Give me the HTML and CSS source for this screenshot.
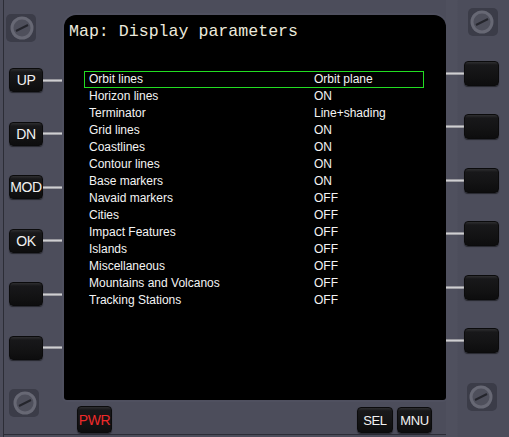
FILE: index.html
```html
<!DOCTYPE html>
<html lang="en">
<head>
    <meta charset="UTF-8">
    <meta name="viewport" content="width=device-width, initial-scale=1.0">
    <title>Map: Display parameters</title>
    <link rel="stylesheet" href="styles.css">
</head>
<body>
    <div class="panel">
        <!-- left column: screw, line select keys, screw -->
        <div class="side side-left">
            <svg class="screw screw-tl" width="32" height="32" viewBox="0 0 32 32">
                <rect x="0" y="2" width="30" height="28" rx="5" fill="#3b3c48"/>
                <circle cx="16" cy="16" r="11.5" fill="#676874"/>
                <circle cx="16" cy="16" r="8.5" fill="#4e4f5b"/>
                <line x1="10" y1="19" x2="22" y2="13" stroke="#24252c" stroke-width="2"/>
            </svg>
            <div class="keys">
                <div class="key-row"><span class="key">UP</span><span class="wire"></span></div>
                <div class="key-row"><span class="key">DN</span><span class="wire"></span></div>
                <div class="key-row"><span class="key">MOD</span><span class="wire"></span></div>
                <div class="key-row"><span class="key">OK</span><span class="wire"></span></div>
                <div class="key-row"><span class="key"></span><span class="wire"></span></div>
                <div class="key-row"><span class="key"></span><span class="wire"></span></div>
            </div>
            <svg class="screw screw-bl" width="32" height="32" viewBox="0 0 32 32">
                <rect x="0" y="2" width="30" height="28" rx="5" fill="#3b3c48"/>
                <circle cx="16" cy="16" r="11.5" fill="#676874"/>
                <circle cx="16" cy="16" r="8.5" fill="#4e4f5b"/>
                <line x1="10" y1="19" x2="22" y2="13" stroke="#24252c" stroke-width="2"/>
            </svg>
        </div>

        <div class="screen">
            <div class="title">Map: Display parameters</div>
            <div class="params">
                <div class="param selected"><span>Orbit lines</span><span>Orbit plane</span></div>
                <div class="param"><span>Horizon lines</span><span>ON</span></div>
                <div class="param"><span>Terminator</span><span>Line+shading</span></div>
                <div class="param"><span>Grid lines</span><span>ON</span></div>
                <div class="param"><span>Coastlines</span><span>ON</span></div>
                <div class="param"><span>Contour lines</span><span>ON</span></div>
                <div class="param"><span>Base markers</span><span>ON</span></div>
                <div class="param"><span>Navaid markers</span><span>OFF</span></div>
                <div class="param"><span>Cities</span><span>OFF</span></div>
                <div class="param"><span>Impact Features</span><span>OFF</span></div>
                <div class="param"><span>Islands</span><span>OFF</span></div>
                <div class="param"><span>Miscellaneous</span><span>OFF</span></div>
                <div class="param"><span>Mountains and Volcanos</span><span>OFF</span></div>
                <div class="param"><span>Tracking Stations</span><span>OFF</span></div>
            </div>
        </div>

        <div class="bottom">
            <span class="key key-wide key-pwr">PWR</span>
            <span class="key key-wide key-sel">SEL</span>
            <span class="key key-wide">MNU</span>
        </div>

        <!-- right column -->
        <div class="side side-right">
            <svg class="screw screw-tr" width="32" height="32" viewBox="0 0 32 32">
                <rect x="2" y="2" width="30" height="28" rx="5" fill="#3b3c48"/>
                <circle cx="16" cy="16" r="11.5" fill="#676874"/>
                <circle cx="16" cy="16" r="8.5" fill="#4e4f5b"/>
                <line x1="10" y1="19" x2="22" y2="13" stroke="#24252c" stroke-width="2"/>
            </svg>
            <div class="keys">
                <div class="key-row"><span class="wire"></span><span class="key key-r"></span></div>
                <div class="key-row"><span class="wire"></span><span class="key key-r"></span></div>
                <div class="key-row"><span class="wire"></span><span class="key key-r"></span></div>
                <div class="key-row"><span class="wire"></span><span class="key key-r"></span></div>
                <div class="key-row"><span class="wire"></span><span class="key key-r"></span></div>
                <div class="key-row"><span class="wire"></span><span class="key key-r"></span></div>
            </div>
            <svg class="screw screw-br" width="32" height="32" viewBox="0 0 32 32">
                <rect x="2" y="2" width="30" height="28" rx="5" fill="#3b3c48"/>
                <circle cx="16" cy="16" r="11.5" fill="#676874"/>
                <circle cx="16" cy="16" r="8.5" fill="#4e4f5b"/>
                <line x1="10" y1="19" x2="22" y2="13" stroke="#24252c" stroke-width="2"/>
            </svg>
        </div>
    </div>
</body>
</html>
```

FILE: styles.css
```css
body {
    margin: 0;
    background: #4c4d5b;
    font-family: 'Liberation Sans', Arial, sans-serif;
}

.panel {
    width: 509px;
    height: 437px;
    display: grid;
    grid-template-columns: 64px 382px 63px;
    grid-template-rows: 15px 385px 37px;
    background: #4c4d5b;
    box-shadow: inset 3px 0 0 #4c4d5b, inset 4px 0 0 #2c2d36,
                inset -3px 0 0 #4c4d5b, inset -4px 0 0 #2c2d36,
                inset 0 -2px 0 #4c4d5b, inset 0 -3px 0 #2c2d36;
    overflow: hidden;
}

.side {
    grid-row: 1 / 4;
    display: flex;
    flex-direction: column;
}

.side-left {
    grid-column: 1;
}

.side-right {
    grid-column: 3;
    background: linear-gradient(90deg, #4f505e 0, #4f505e 11px, #4c4d5b 12px);
}

.screw {
    display: block;
    flex: none;
}

.screw-tl {
    margin: 12px 0 0 6px;
}

.screw-bl {
    margin: 27px 0 0 9px;
}

.screw-tr {
    margin: 6px 0 0 20px;
}

.screw-br {
    margin: 28px 0 0 19px;
}

.keys {
    display: flex;
    flex-direction: column;
    gap: 29.5px;
}

.side-left .keys {
    margin-top: 24px;
}

.side-right .keys {
    margin-top: 23px;
}

.key-row {
    display: flex;
    align-items: center;
    height: 24px;
}

.side-left .key-row {
    padding-left: 9px;
}

.key {
    box-sizing: border-box;
    width: 34px;
    height: 24px;
    display: flex;
    align-items: center;
    justify-content: center;
    background: linear-gradient(#2e2e30 0, #18181a 3px, #131314 60%, #0d0d0e);
    border: 1px solid #0b0b0c;
    border-radius: 4px;
    box-shadow: 0 1px 1px rgba(0,0,0,0.5);
    color: #f2f2f2;
    font-size: 14px;
    letter-spacing: -0.4px;
    flex: none;
}

.key-r {
    width: 35px;
    height: 25px;
}

.wire {
    flex: 1;
    height: 3px;
    background: linear-gradient(#7c7c84, #cfcfd2 50%, #85858c);
}

.side-left .wire {
    width: 21px;
    flex: none;
}

.side-right .wire {
    width: 18px;
    flex: none;
}

.screen {
    grid-column: 2;
    grid-row: 2;
    background: #000;
    border-radius: 12px 12px 3px 3px;
    padding: 7px 0 0 5px;
    box-shadow: 0 0 0 2px #4f505f;
}

.title {
    font-family: 'Liberation Mono', 'Courier New', monospace;
    font-size: 16.6px;
    color: #ebe9dc;
}

.params {
    margin: 30px 0 0 15px;
    width: 340px;
}

.param {
    box-sizing: border-box;
    height: 17px;
    border: 1px solid transparent;
    padding-left: 4px;
    display: grid;
    grid-template-columns: 225px 1fr;
    font-size: 12px;
    line-height: 15px;
    color: #f4f4f4;
    white-space: nowrap;
}

.param.selected {
    border-color: #22dd22;
}

.bottom {
    grid-column: 2;
    grid-row: 3;
    display: flex;
    align-items: flex-start;
    padding: 6px 0 0 13px;
}

.key-wide {
    width: 36px;
    height: 26px;
    font-size: 13px;
}

.key-pwr {
    color: #ee2a2a;
    font-size: 14px;
    height: 27px;
    width: 35px;
}

.key-sel {
    margin-left: 245px;
    margin-right: 4px;
    margin-top: 1px;
}

.key-sel + .key-wide {
    margin-top: 1px;
    width: 35px;
}
```
